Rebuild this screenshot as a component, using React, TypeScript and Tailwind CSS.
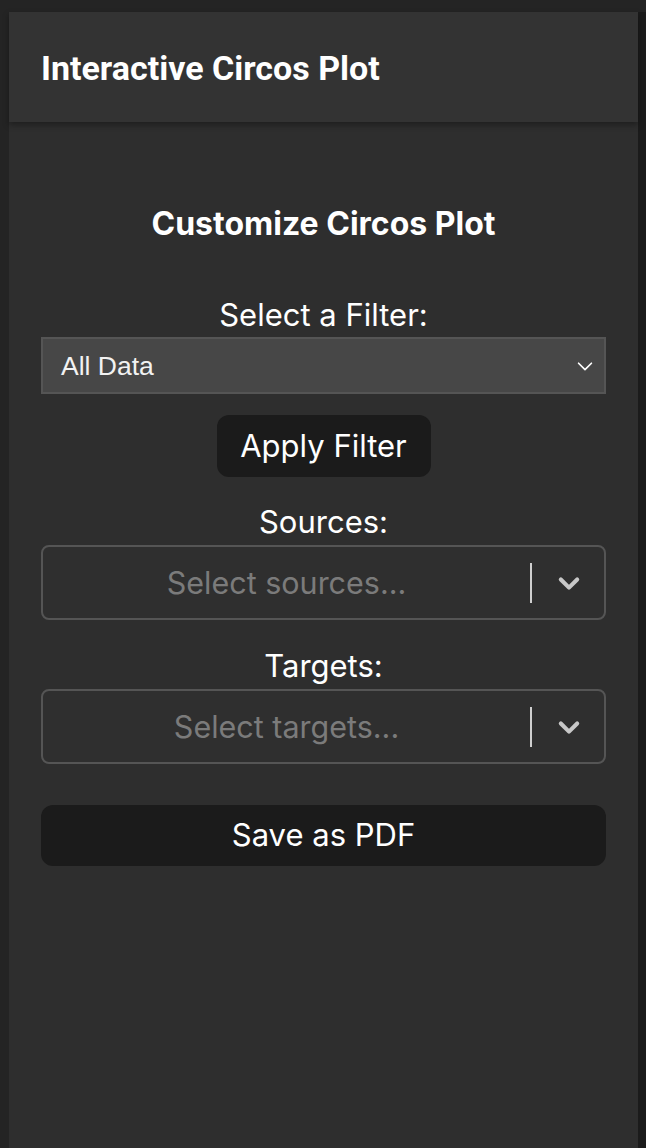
import React from "react"

function Chevron({ className }: { className?: string }) {
  return (
    <svg className={className} viewBox="0 0 24 24" fill="none" stroke="currentColor" strokeLinecap="round" strokeLinejoin="round">
      <path d="M5 9l7 7 7-7" />
    </svg>
  )
}

function MultiSelect({ placeholder }: { placeholder: string }) {
  return (
    <div className="flex h-[75px] w-full items-center rounded-[8px] border-2 border-[#555555] bg-[#2f2f2f]">
      <div className="flex-1 text-center text-[30.5px] text-[#7b7b7b]">{placeholder}</div>
      <div className="h-[40px] w-[2px] bg-[#cfcfcf]" />
      <div className="flex w-[72px] items-center justify-center pl-[2px] text-[#c8c8c8]">
        <Chevron className="h-[28px] w-[28px] [stroke-width:3.5]" />
      </div>
    </div>
  )
}

export default function App() {
  return (
    <div className="flex min-h-[1148px] bg-[#242424] pt-[12px] pl-[9px]" style={{ fontFamily: "Inter, 'Noto Sans', sans-serif" }}>
      <div className="flex flex-1 flex-col bg-[#2e2e2e]">
        <header className="relative z-10 flex h-[110px] items-center bg-[#333333] px-[32px] shadow-[0_3px_6px_rgba(0,0,0,0.35)]">
          <h1 className="pt-[2px] text-[34px] font-bold text-white" style={{ fontFamily: "Roboto, 'Noto Sans', sans-serif" }}>
            Interactive Circos Plot
          </h1>
        </header>
        <main className="flex flex-col items-center px-[32px] pt-[84px] text-white">
          <h2 className="text-[32px] font-bold leading-[36px]">Customize Circos Plot</h2>
          <label className="mt-[56px] text-[31px] leading-[34px]">Select a Filter:</label>
          <div className="mt-[5px] flex h-[57px] w-full items-center justify-between border-2 border-[#555555] bg-[#474747] pl-[18px] pr-[8px]">
            <span className="pt-[2px] text-[26.5px] text-[#f2f2f2]" style={{ fontFamily: "'Liberation Sans', Arial, sans-serif" }}>All Data</span>
            <Chevron className="h-[22px] w-[22px] text-white [stroke-width:1.8]" />
          </div>
          <button className="mt-[21px] h-[62px] w-[214px] rounded-[12px] bg-[#1b1b1b] text-[31px] text-white">Apply Filter</button>
          <label className="mt-[28px] text-[31px] leading-[34px]">Sources:</label>
          <div className="mt-[6px] w-full">
            <MultiSelect placeholder="Select sources..." />
          </div>
          <label className="mt-[29px] text-[31px] leading-[34px]">Targets:</label>
          <div className="mt-[6px] w-full">
            <MultiSelect placeholder="Select targets..." />
          </div>
          <button className="mt-[41px] h-[61px] w-full rounded-[12px] bg-[#1b1b1b] text-[31px] text-white">Save as PDF</button>
        </main>
      </div>
      <div className="w-[8px] bg-[#1b1b1b]" />
    </div>
  )
}
